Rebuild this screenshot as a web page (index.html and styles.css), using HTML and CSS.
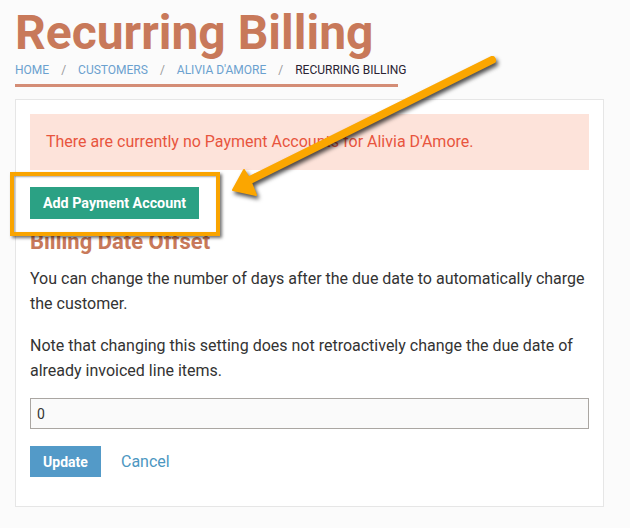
FILE: index.html
```html
<!DOCTYPE html>
<html>
<head>
<meta charset="utf-8">
<link rel="stylesheet" href="styles.css">
</head>
<body>
<div class="page">
  <h1 class="title">Recurring Billing</h1>
  <nav class="crumbs">
    <a class="crumb-link">HOME</a><span class="sep">/</span>
    <a class="crumb-link">CUSTOMERS</a><span class="sep">/</span>
    <a class="crumb-link">ALIVIA D'AMORE</a><span class="sep">/</span>
    <span class="crumb-current">RECURRING BILLING</span>
  </nav>
  <div class="title-bar"></div>

  <div class="card">
    <div class="alert">There are currently no Payment Accounts for Alivia D'Amore.</div>
    <div class="add-wrap">
      <button class="btn btn-green">Add Payment Account</button>
      <div class="highlight"></div>
    </div>
    <h2 class="section-title">Billing Date Offset</h2>
    <p class="text">You can change the number of days after the due date to automatically charge the customer.</p>
    <p class="text">Note that changing this setting does not retroactively change the due date of already invoiced line items.</p>
    <input class="field" type="text" value="0">
    <div class="actions">
      <button class="btn btn-blue">Update</button>
      <a class="cancel">Cancel</a>
    </div>
  </div>
</div>

<svg class="arrow" width="630" height="528" viewBox="0 0 630 528">
  <g class="arrow-g">
    <line x1="492" y1="60" x2="250" y2="180" stroke="#fba600" stroke-width="8" stroke-linecap="round"/>
    <polygon points="233,190 244,170 249,178 256,195" fill="#fba600" stroke="#fba600" stroke-width="2" stroke-linejoin="round"/>
  </g>
</svg>
</body>
</html>
```

FILE: styles.css
```css
html, body {
  margin: 0;
  padding: 0;
}
body {
  background: #fbfbfb;
  font-family: Roboto, "Liberation Sans", sans-serif;
  color: #333;
  width: 630px;
  height: 528px;
  overflow: hidden;
  position: relative;
}
.page {
  padding: 0 26px 0 15px;
}
.title {
  margin: 7px 0 0 0;
  font-size: 48px;
  line-height: 52px;
  font-weight: 700;
  color: #c8795a;
}
.crumbs {
  margin-top: 3px;
  font-size: 12px;
  line-height: 16px;
  display: flex;
  align-items: baseline;
}
.crumb-link {
  color: #6ba1cf;
}
.crumb-current {
  color: #2a2333;
}
.sep {
  color: #9a9a9a;
  margin: 0 12px;
}
.title-bar {
  width: 383px;
  height: 3px;
  margin-top: 6px;
  background: #d48d76;
}
.card {
  margin-top: 12px;
  background: #fff;
  border: 1px solid #e6e6e6;
  padding: 14px 14px 29px 14px;
}
.alert {
  background: #fde3da;
  color: #e8553e;
  font-size: 16px;
  line-height: 26px;
  padding: 15px 16px;
  font-weight: 400;
}
.add-wrap {
  position: relative;
  margin-top: 17px;
  display: flex;
}
.btn {
  border: 0;
  font-family: Roboto, "Liberation Sans", sans-serif;
  font-weight: 700;
  color: #fff;
  font-size: 14px;
  height: 32px;
  padding: 0 12px;
  cursor: pointer;
}
.btn-green {
  background: #2ba184;
  width: 169px;
  font-size: 14.3px;
}
.highlight {
  position: absolute;
  left: -20px;
  top: -15px;
  width: 202px;
  height: 56px;
  border: 4px solid #f9a400;
  box-shadow: 2px 2px 3px rgba(0, 0, 0, 0.55), inset 1px 1px 2px rgba(0, 0, 0, 0.35);
}
.section-title {
  margin: 10px 0 0 0;
  font-size: 22px;
  line-height: 26px;
  font-weight: 700;
  color: #c8795a;
}
.text {
  margin: 11px 0 0 0;
  font-size: 16px;
  line-height: 25px;
  color: #333;
}
.text + .text {
  margin-top: 17px;
}
.field {
  display: block;
  box-sizing: border-box;
  width: 100%;
  height: 31px;
  margin-top: 15px;
  border: 1px solid #aaa6a2;
  background: #fafafa;
  font-family: Roboto, "Liberation Sans", sans-serif;
  font-size: 14px;
  color: #333;
  padding: 0 6px;
  outline: none;
}
.actions {
  margin-top: 17px;
  display: flex;
  align-items: center;
}
.btn-blue {
  background: #539ac8;
  width: 71px;
  height: 31px;
}
.cancel {
  margin-left: 20px;
  font-size: 16px;
  color: #4c97c1;
}
.arrow {
  position: absolute;
  left: 0;
  top: 0;
  pointer-events: none;
}
.arrow-g {
  filter: drop-shadow(2px 3px 2px rgba(0, 0, 0, 0.7));
}
```
